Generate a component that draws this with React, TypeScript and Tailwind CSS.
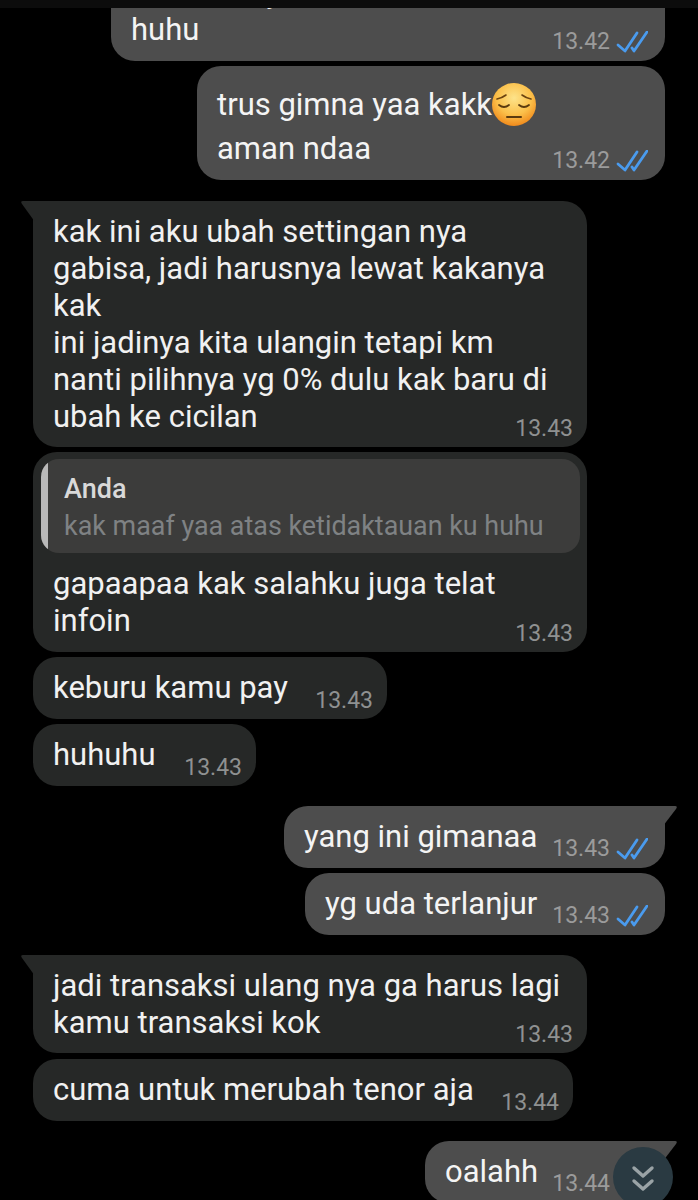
import type { ReactNode } from "react";

const textFont = { fontFamily: "Roboto, sans-serif" };

const DoubleCheck = () => (
  <svg width="32" height="22" viewBox="0 0 32 22" fill="none" className="ml-[6px] mb-[3px] shrink-0">
    <path d="M2 14 L9 20 L21 2" stroke="#4a9bee" strokeWidth="2.8" strokeLinecap="round" strokeLinejoin="round" />
    <path d="M16 17 L18 20 L31 1" stroke="#4a9bee" strokeWidth="2.8" strokeLinecap="round" strokeLinejoin="round" />
  </svg>
);

const PensiveEmoji = () => (
  <svg width="44" height="43" viewBox="0 0 44 43" className="shrink-0">
    <defs>
      <radialGradient id="face" cx="50%" cy="35%" r="65%">
        <stop offset="0%" stopColor="#fde38a" />
        <stop offset="60%" stopColor="#fbc04a" />
        <stop offset="100%" stopColor="#f08a1c" />
      </radialGradient>
    </defs>
    <ellipse cx="22" cy="21.5" rx="22" ry="21.5" fill="url(#face)" />
    <path d="M5 16 Q10 15 14 12" stroke="#6b4310" strokeWidth="1.6" fill="none" strokeLinecap="round" />
    <path d="M39 16 Q34 15 30 12" stroke="#6b4310" strokeWidth="1.6" fill="none" strokeLinecap="round" />
    <path d="M7 22 Q12 26 17 22" stroke="#5a3a0e" strokeWidth="1.8" fill="none" strokeLinecap="round" />
    <path d="M27 22 Q32 26 37 22" stroke="#5a3a0e" strokeWidth="1.8" fill="none" strokeLinecap="round" />
    <path d="M15 34 H29" stroke="#5a3a0e" strokeWidth="2" strokeLinecap="round" />
  </svg>
);

const OutTail = () => (
  <svg width="16" height="22" viewBox="0 0 16 22" className="absolute -right-[14px] top-0">
    <path d="M0 0 H12 Q15 0 13 3 L0 20 Z" fill="#4d4d4d" />
  </svg>
);

const InTail = () => (
  <svg width="16" height="22" viewBox="0 0 16 22" className="absolute -left-[14px] top-0">
    <path d="M16 0 H4 Q1 0 3 3 L16 21 Z" fill="#262827" />
  </svg>
);

const Incoming = ({
  time,
  width,
  tail,
  lines,
}: {
  time: string;
  width: string;
  tail?: boolean;
  lines: string[];
}) => (
  <div className={`relative ml-[33px] flex min-h-[62px] flex-col rounded-[24px] bg-[#262827] pt-3 pb-[4px] pl-5 pr-[14px] text-[31px] leading-[37px] text-[#f1f1f1] ${tail ? "rounded-tl-none" : ""} ${width}`}>
    {tail && <InTail />}
    {lines.slice(0, -1).map((line) => (
      <div key={line} className="whitespace-nowrap">{line}</div>
    ))}
    <div className="flex flex-1 justify-between">
      <span className="whitespace-nowrap pb-2">{lines[lines.length - 1]}</span>
      <span className="self-end text-[23px] leading-[28px] text-[#8f9191]">{time}</span>
    </div>
  </div>
);

const Outgoing = ({
  time,
  width,
  tail,
  first,
  last,
}: {
  time: string;
  width: string;
  tail?: boolean;
  first?: ReactNode;
  last: string;
}) => (
  <div className={`relative mr-[33px] self-end rounded-[24px] bg-[#4d4d4d] pt-3 pb-[5px] pl-5 pr-[17px] text-[31px] leading-[37px] text-[#f4f4f4] ${tail ? "rounded-tr-none" : ""} ${width}`}>
    {tail && <OutTail />}
    {first}
    <div className="flex items-end justify-between">
      <span className="whitespace-nowrap pb-2">{last}</span>
      <div className="flex items-end">
        <span className="text-[23px] leading-[28px] text-[#9b9b9b]">{time}</span>
        <DoubleCheck />
      </div>
    </div>
  </div>
);

export default function App() {
  return (
    <div className="relative h-[1200px] w-[698px] overflow-hidden bg-black" style={textFont}>
      <div className="absolute inset-x-0 top-0 z-10 h-2 bg-[#0c0c0c]" />

      <div className="-mt-[38px] flex flex-col">
        <Outgoing
          time="13.42"
          width="w-[554px]"
          first={<div className="whitespace-nowrap">kak maaf yaa atas ketidaktauan ku</div>}
          last="huhu"
        />

        <Outgoing
          time="13.42"
          width="mt-[5px] w-[468px]"
          first={
            <div className="flex h-[52px] items-center whitespace-nowrap">
              trus gimna yaa kakk
              <PensiveEmoji />
            </div>
          }
          last="aman ndaa"
        />

        <div className="mt-[21px] flex flex-col gap-[5px]">
          <Incoming
            time="13.43"
            width="w-[554px]"
            tail
            lines={[
              "kak ini aku ubah settingan nya",
              "gabisa, jadi harusnya lewat kakanya",
              "kak",
              "ini jadinya kita ulangin tetapi km",
              "nanti pilihnya yg 0% dulu kak baru di",
              "ubah ke cicilan",
            ]}
          />

          <div className="ml-[33px] w-[554px] rounded-[24px] bg-[#262827] pl-2 pr-[7px] pt-[7px] pb-[4px]">
            <div className="flex h-[94px] overflow-hidden rounded-[18px] bg-[#3c3c3b]">
              <div className="w-[7px] shrink-0 bg-[#b9b9b9]" />
              <div className="pl-4 pt-[14px]">
                <div className="text-[27px] leading-[32px] font-medium text-[#d9d9d9]">Anda</div>
                <div className="mt-[5px] text-[26.9px] leading-[32px] text-[#7f8284]">
                  kak maaf yaa atas ketidaktauan ku huhu
                </div>
              </div>
            </div>
            <div className="pt-3 pl-3 pr-[7px] text-[31px] leading-[37px] text-[#f1f1f1]">
              <div>gapaapaa kak salahku juga telat</div>
              <div className="flex items-end justify-between">
                <span className="pb-[9px]">infoin</span>
                <span className="text-[23px] leading-[28px] text-[#8f9191]">13.43</span>
              </div>
            </div>
          </div>

          <Incoming time="13.43" width="w-[354px]" lines={["keburu kamu pay"]} />
          <Incoming time="13.43" width="w-[223px]" lines={["huhuhu"]} />
        </div>

        <div className="mt-[20px] flex flex-col gap-[5px]">
          <Outgoing time="13.43" width="w-[381px]" tail last="yang ini gimanaa" />
          <Outgoing time="13.43" width="w-[360px]" last="yg uda terlanjur" />
        </div>

        <div className="mt-[20px] flex flex-col gap-[6px]">
          <Incoming
            time="13.43"
            width="w-[554px]"
            tail
            lines={["jadi transaksi ulang nya ga harus lagi", "kamu transaksi kok"]}
          />
          <Incoming time="13.44" width="w-[540px]" lines={["cuma untuk merubah tenor aja"]} />
        </div>

        <div className="mt-[20px] flex flex-col">
          <Outgoing time="13.44" width="w-[240px]" tail last="oalahh" />
        </div>
      </div>

      <div className="absolute left-[613px] top-[1147px] flex h-[60px] w-[60px] items-start justify-center rounded-full bg-[#2a3a42] pt-[18px]">
        <svg width="24" height="30" viewBox="0 0 24 30" fill="none">
          <path d="M3 3 L12 11 L21 3" stroke="#9aa3a6" strokeWidth="3.4" strokeLinecap="round" strokeLinejoin="round" />
          <path d="M3 16 L12 24 L21 16" stroke="#9aa3a6" strokeWidth="3.4" strokeLinecap="round" strokeLinejoin="round" />
        </svg>
      </div>
    </div>
  );
}
